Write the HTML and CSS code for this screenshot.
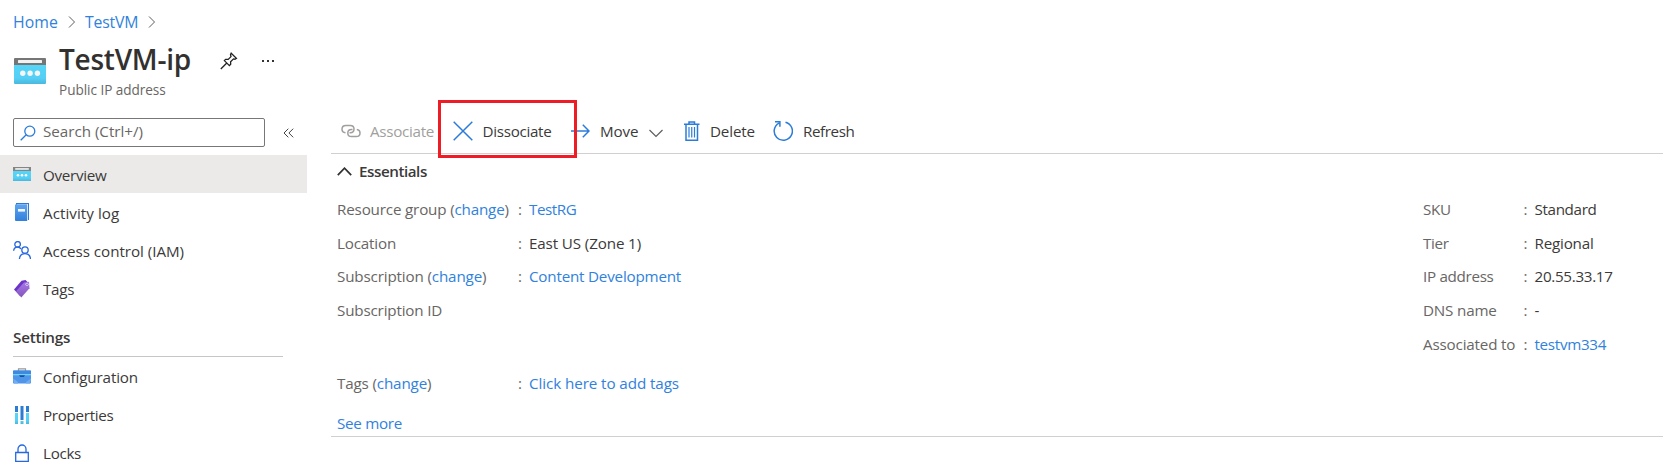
FILE: index.html
```
<!DOCTYPE html>
<html lang="en">
<head>
<meta charset="utf-8">
<title>TestVM-ip</title>
<link rel="stylesheet" href="styles.css">
</head>
<body>
<nav class="breadcrumb">
  <a class="crumb-home">Home</a>
  <svg class="sep" width="8" height="14" viewBox="0 0 8 14"><path d="M1 1.5 6.5 7 1 12.5"/></svg>
  <a class="crumb-vm">TestVM</a>
  <svg class="sep" width="8" height="14" viewBox="0 0 8 14"><path d="M1 1.5 6.5 7 1 12.5"/></svg>
</nav>
<header class="title-bar">
  <svg class="title-icon" width="32" height="26" viewBox="0 0 32 26">
    <defs><linearGradient id="cyan" x1="0" y1="0" x2="0" y2="1"><stop offset="0" stop-color="#55d6f8"/><stop offset=".7" stop-color="#55cff5"/><stop offset="1" stop-color="#4bb7dc"/></linearGradient></defs>
    <path d="M0 6.5h32V25a1 1 0 0 1-1 1H1a1 1 0 0 1-1-1z" fill="url(#cyan)"/>
    <path d="M1 0h30a1 1 0 0 1 1 1v6H0V1a1 1 0 0 1 1-1z" fill="#767676"/>
    <rect x="4" y="2" width="24" height="3" rx=".5" fill="#f2f2f2"/>
    <g fill="#f5f5f5"><circle cx="8.8" cy="15.3" r="2.7"/><circle cx="16.1" cy="15.3" r="2.7"/><circle cx="23.4" cy="15.3" r="2.7"/></g>
  </svg>
  <div class="title-text">
    <div class="title-row">
      <h1>TestVM-ip</h1>
      <svg class="pin" width="18" height="18" viewBox="0 0 18 18"><path d="M11.2 1.2 16.4 6.4 14.9 7.2 13.5 6.9 10.6 9.8 10.7 12.3 9.4 13.6 4.4 8.6 5.7 7.3 8.2 7.4 11 4.6 10.5 2.6zM6.8 11 .8 17"/></svg>
      <svg class="dots" width="14" height="4" viewBox="0 0 14 4"><path d="M1 1h2v2H1zM6 1h2v2H6zM11 1h2v2h-2z"/></svg>
    </div>
    <div class="subtitle">Public IP address</div>
  </div>
</header>
<div class="layout">
  <aside class="sidebar">
    <div class="search-row">
      <div class="search">
        <svg width="16" height="16" viewBox="0 0 16 16"><circle cx="9.8" cy="6.2" r="5"/><path d="M6.2 9.8.7 15.3"/></svg>
        <span class="t-search">Search (Ctrl+/)</span>
      </div>
      <svg class="collapse" width="11" height="10" viewBox="0 0 11 10"><path d="M5.3.7 1 5l4.3 4.3M10.2.7 5.9 5l4.3 4.3"/></svg>
    </div>
    <a class="item selected">
      <svg width="18" height="18" viewBox="0 0 18 18"><path d="M0 5.5h18V16H0z" fill="url(#cyan)"/><path d="M0 2h18v4H0z" fill="#858585"/><path d="M2.2 3.1h13.6v1.7H2.2z" fill="#eee"/><g fill="#fff"><circle cx="5" cy="10.3" r="1.3"/><circle cx="9" cy="10.3" r="1.3"/><circle cx="13" cy="10.3" r="1.3"/></g></svg>
      <span class="t-overview">Overview</span>
    </a>
    <a class="item">
      <svg width="18" height="18" viewBox="0 0 18 18"><defs><linearGradient id="book" x1="0" y1="0" x2="0" y2="1"><stop offset="0" stop-color="#5ea5ef"/><stop offset="1" stop-color="#3180dc"/></linearGradient></defs><path d="M3 0h13v17H3z" fill="#2f78d4"/><path d="M4 1h11v16H4z" fill="#f4f8fc"/><path d="M2 2a1 1 0 0 1 1-.7h11.2V18H3a1 1 0 0 1-1-1z" fill="url(#book)"/><path d="M5 6h7v2.6H5z" fill="#f2f7ff"/></svg>
      <span class="t-activity">Activity log</span>
    </a>
    <a class="item">
      <svg class="people" width="18" height="18" viewBox="0 0 18 18"><circle cx="4.6" cy="3.4" r="2.8"/><path d="M.6 9.8C.9 5.6 6 4.8 8 8"/><circle cx="12" cy="9" r="3.2"/><path d="M6.4 18c.6-7.3 10.5-7.3 11.1 0"/></svg>
      <span class="t-access">Access control (IAM)</span>
    </a>
    <a class="item">
      <svg width="18" height="18" viewBox="0 0 18 18"><defs><linearGradient id="tag" x1="0" y1="0" x2="0" y2="1"><stop offset="0" stop-color="#a877e8"/><stop offset="1" stop-color="#8455bd"/></linearGradient></defs><path d="M8.5.8 12.5 0 14.5 2 7 16 1 9.6z" fill="#6a34c9"/><path d="M11 2.6 16 1.8 16.5 8.3 8.3 17.5 3 11.2z" fill="url(#tag)"/><circle cx="14" cy="4.3" r="1.5" fill="#eee4ff"/><circle cx="14" cy="4.3" r=".7" fill="#55289e"/></svg>
      <span class="t-tags">Tags</span>
    </a>
    <h2><span class="t-settings">Settings</span></h2>
    <a class="item">
      <svg width="18" height="18" viewBox="0 0 18 18"><path d="M5.5 4V1.8h7V4" fill="none" stroke="#999" stroke-width="1.2"/><rect y="3.5" width="18" height="13" rx=".8" fill="#4f96ea"/><path d="M0 4.2a.7.7 0 0 1 .7-.7h16.6a.7.7 0 0 1 .7.7V7H0z" fill="#3f89df"/><path d="M0 7h18v1.3H0z" fill="#6ed2fb"/><path d="M6 8.3h6L10.8 10H7.2z" fill="#17519b"/><path d="M0 11.5 5 15v1.5H1zM18 11.5 13 15v1.5h4z" fill="#72adf2"/></svg>
      <span class="t-config">Configuration</span>
    </a>
    <a class="item">
      <svg width="18" height="18" viewBox="0 0 18 18"><path d="M2 0h3v6H2zM7.5 0h3v14h-3zM13 0h3v6h-3z" fill="#2c7cd3"/><path d="M2 7h3v11H2zM13 7h3v11h-3zM7.5 15h3v3h-3z" fill="url(#cyan)"/></svg>
      <span class="t-props">Properties</span>
    </a>
    <a class="item">
      <svg class="people" width="18" height="18" viewBox="0 0 18 18"><path d="M2.7 8.5h12.6v9H2.7zM5 8.5V5a4 4 0 0 1 8 0v3.5"/></svg>
      <span class="t-locks">Locks</span>
    </a>
  </aside>
  <main>
    <div class="toolbar">
      <button class="disabled">
        <svg width="20" height="14" viewBox="0 0 20 14"><path d="M4.5 8.7C2.2 8.5 1 7 1 5.2 1 3 2.6 1.5 4.9 1.5h4.3c2.3 0 3.8 1.5 3.8 3.6 0 2.2-1.5 3.7-3.6 3.7H8.5M11.5 5.4H10.5C8.2 5.4 6.8 6.9 6.8 9c0 2.2 1.5 3.6 3.7 3.6h4.7c2.3 0 3.8-1.5 3.8-3.6 0-1.9-1.3-3.3-3.2-3.5"/></svg>
        <span class="t-assoc">Associate</span>
      </button>
      <button class="highlighted">
        <svg width="20" height="20" viewBox="0 0 20 20"><path d="m.7.7 18.6 18.6M19.3.7.7 19.3"/></svg>
        <span class="t-dissoc">Dissociate</span>
      </button>
      <button>
        <svg width="19" height="14" viewBox="0 0 19 14"><path d="M0 7h18M11.8.8 18 7l-6.2 6.2"/></svg>
        <span class="t-move">Move</span>
        <svg class="caret" width="14" height="9" viewBox="0 0 14 9"><path d="m.5 1 6.5 6.5L13.5 1"/></svg>
      </button>
      <button>
        <svg width="16" height="20" viewBox="0 0 16 20"><path d="M0 3.2h15.5M2 3.2v16h11.5v-16M5 3V1h5.500v2"/><path class="thin" d="M5 6v10.500M7.750 6v10.500M10.500 6v10.500"/></svg>
        <span class="t-delete">Delete</span>
      </button>
      <button>
        <svg width="20" height="20" viewBox="0 0 20 20"><path d="M12.5 1.3A9.1 9.1 0 1 1 6 2.1M2 .8h4.9v4.9"/></svg>
        <span class="t-refresh">Refresh</span>
      </button>
    </div>
    <section class="essentials">
      <h3><svg width="15" height="9" viewBox="0 0 15 9"><path d="M.8 8.2 7.5 1.2l6.7 7"/></svg><span class="t-ess">Essentials</span></h3>
      <div class="columns">
        <dl class="left">
          <dt><span class="t-rg">Resource group (<a>change</a>)</span></dt><dd class="colon">:</dd><dd><a class="t-testrg">TestRG</a></dd>
          <dt><span class="t-loc">Location</span></dt><dd class="colon">:</dd><dd><span class="t-east">East US (Zone 1)</span></dd>
          <dt><span class="t-sub">Subscription (<a>change</a>)</span></dt><dd class="colon">:</dd><dd><a class="t-content">Content Development</a></dd>
          <dt><span class="t-subid">Subscription ID</span></dt>
        </dl>
        <dl class="right">
          <dt><span class="t-sku">SKU</span></dt><dd class="colon">:</dd><dd><span class="t-std">Standard</span></dd>
          <dt><span class="t-tier">Tier</span></dt><dd class="colon">:</dd><dd><span class="t-reg">Regional</span></dd>
          <dt><span class="t-ip">IP address</span></dt><dd class="colon">:</dd><dd><span class="t-num">20.55.33.17</span></dd>
          <dt><span class="t-dns">DNS name</span></dt><dd class="colon">:</dd><dd>-</dd>
          <dt><span class="t-to">Associated to</span></dt><dd class="colon">:</dd><dd><a class="t-vm">testvm334</a></dd>
        </dl>
      </div>
      <dl class="left tag-row">
        <dt><span class="t-tagc">Tags (<a>change</a>)</span></dt><dd class="colon">:</dd><dd><a class="t-click">Click here to add tags</a></dd>
      </dl>
      <a class="more"><span class="t-more">See more</span></a>
    </section>
  </main>
</div>
</body>
</html>
```
FILE: styles.css
```
*, *::after { box-sizing: border-box; }
body {
  margin: 0;
  height: 468px;
  overflow: hidden;
  background: #fff;
  color: #3b3a39;
  font: 15.2px/20px "Open Sans", "Noto Sans", sans-serif;
  letter-spacing: -0.3px;
  white-space: nowrap;
}
svg { flex: none; display: block; }
a { color: #2f82dd; }
h1, h2, h3, dl, dd { margin: 0; }

.breadcrumb { display: flex; align-items: center; height: 43px; padding-left: 13px; font-size: 15.8px; }
.breadcrumb a { width: 46px; }
.crumb-home { letter-spacing: 0.1px; }
.breadcrumb .crumb-vm { width: 54px; letter-spacing: -0.2px; }
.breadcrumb .sep { margin: 0 9px; fill: none; stroke: #605e5c; }

.title-bar { display: flex; height: 67px; padding: 1px 0 0 14px; }
.title-icon { margin-top: 14px; }
.title-text { margin-left: 13px; }
.title-row { display: flex; align-items: center; height: 34px; }
h1 { width: 133px; font-size: 28px; line-height: 34px; font-weight: 600; letter-spacing: -0.25px; margin-top: -5px; color: #323130; }
.pin { margin-left: 28px; fill: none; stroke: #222; stroke-width: 1.3; }
.dots { margin-left: 23px; fill: #333; }
.subtitle { margin-top: 2px; font-size: 13.6px; letter-spacing: -0.05px; color: #686664; }

.layout { display: grid; grid-template-columns: 307px 1fr; column-gap: 24px; }
.search-row { display: flex; align-items: center; height: 45px; padding: 0 0 0 13px; }
.search {
  display: flex; align-items: center; gap: 7px;
  width: 252px; height: 29px; padding-left: 6px;
  border: 1px solid #777; border-radius: 2px; color: #686664;
}
.search svg { fill: none; stroke: #2b7cd9; stroke-width: 1.3; }
.search span { padding-bottom: 3px; letter-spacing: -0.02px; }
.collapse { margin-left: 18px; fill: none; stroke: #444; }
.item { display: flex; align-items: center; gap: 12px; height: 38.2px; padding-left: 13px; color: #3b3a39; }
.item span { padding-top: 1px; }
.selected { background: #ebeae9; }
.people { fill: none; stroke: #2768e0; stroke-width: 1.3; }
h2 { width: 270px; height: 49px; margin: 0 0 0.6px 13px; padding-top: 19px; border-bottom: 1px solid #c8c6c4; font-size: 15.2px; line-height: 20px; font-weight: 600; }
.t-activity { letter-spacing: 0.05px; }
.t-access { letter-spacing: -0.04px; }
.t-settings { letter-spacing: -0.2px; }
.t-config { letter-spacing: -0.14px; }

.toolbar { display: grid; grid-template-columns: 112px 118px 113px 89px 100px; height: 44px; padding-left: 10px; border-bottom: 1px solid #d2d0ce; }
button {
  position: relative; display: flex; align-items: center; gap: 10px;
  padding: 0; height: 42px; border: 0; background: none;
  color: #3b3a39; font: inherit; letter-spacing: inherit;
}
button svg { fill: none; stroke: #2b7cd9; stroke-width: 1.5; }
button .thin { stroke-width: 1.2; }
button .caret { position: relative; top: 2px; stroke: #605e5c; stroke-width: 1.2; }
.disabled { gap: 9px; color: #a19f9d; }
.disabled svg { stroke: #a19f9d; }
.highlighted { z-index: 1; }
.highlighted::after { content: ""; position: absolute; left: -15px; top: -10px; width: 139px; height: 58px; border: 3px solid #ee1c24; }
.t-dissoc { margin-left: -0.5px; }
.t-refresh { letter-spacing: -0.4px; }
.t-move { letter-spacing: -0.1px; }
.t-delete { letter-spacing: -0.15px; }

.essentials { border-bottom: 1px solid #d2d0ce; height: 283px; padding-left: 6px; }
h3 { display: flex; align-items: center; gap: 7px; height: 34px; margin-bottom: 4px; font-size: 15.2px; font-weight: 600; }
h3 svg { fill: none; stroke: #323130; stroke-width: 1.7; }
.t-ess { letter-spacing: -0.45px; }
.columns { display: grid; grid-template-columns: 1086px 1fr; height: 174px; }
dl { display: grid; grid-auto-rows: 33.7px; align-items: center; align-content: start; color: #686664; }
.left { grid-template-columns: 181px 11px 1fr; }
.right { grid-template-columns: 100.5px 11px 1fr; }
dd:not(.colon) { color: #3b3a39; }
.t-rg, .t-subid, .t-to { letter-spacing: -0.17px; }
.t-content { letter-spacing: -0.2px; }
.t-loc, .t-dns { letter-spacing: -0.18px; }
.t-sub { letter-spacing: -0.15px; }
.t-tagc { letter-spacing: -0.15px; }
.t-testrg { letter-spacing: -0.45px; }
.t-east { letter-spacing: -0.13px; }
.t-click { letter-spacing: -0.08px; }
.t-std { letter-spacing: -0.35px; }
.t-reg { letter-spacing: -0.2px; }
.more { display: block; margin-top: 13px; }
```
